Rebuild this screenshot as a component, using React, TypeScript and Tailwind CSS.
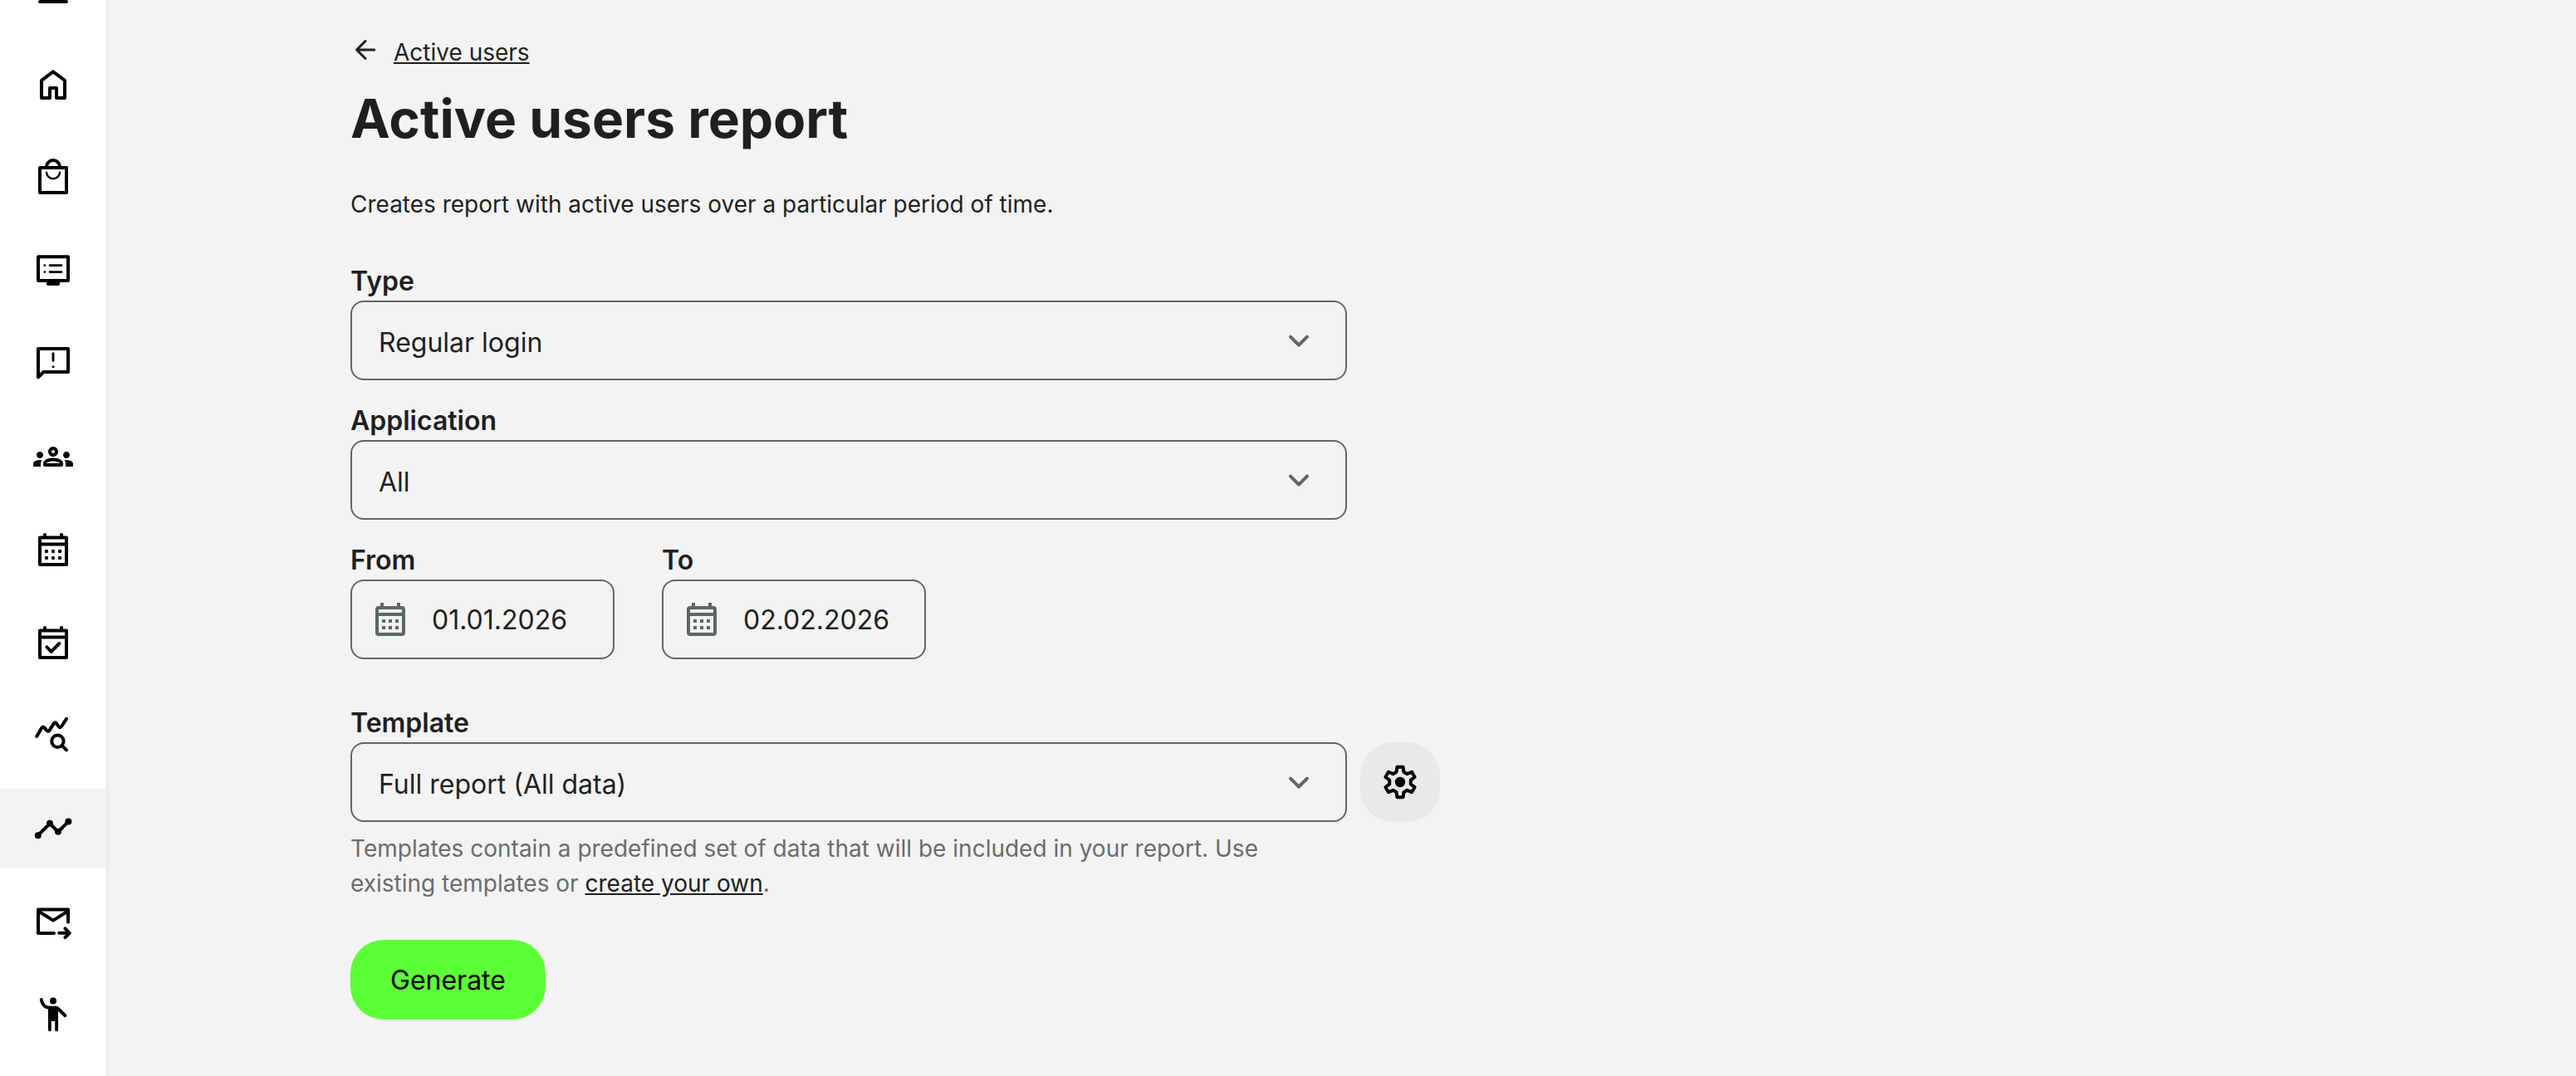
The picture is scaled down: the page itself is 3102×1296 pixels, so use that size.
import React, { useState } from 'react';

type IconProps = { className?: string };

const Glyph: React.FC<{ children: React.ReactNode; className?: string }> = ({ children, className = 'size-12' }) => (
  <svg
    viewBox="0 0 24 24"
    className={`shrink-0 ${className}`}
    fill="none"
    stroke="currentColor"
    strokeWidth="2"
    strokeLinecap="round"
    strokeLinejoin="round"
    aria-hidden="true"
  >
    {children}
  </svg>
);

const MenuIcon = () => (
  <Glyph>
    <path d="M4 7h16M4 12h16M4 18h16" />
  </Glyph>
);

const HomeIcon = () => (
  <Glyph>
    <path d="M5 20V9.4l7-5.2 7 5.2V20h-5v-6h-4v6z" />
  </Glyph>
);

const BagIcon = () => (
  <Glyph>
    <path d="M4 6h16v15H4z" />
    <path d="M8 5.5a4 4 0 0 1 8 0" />
    <path d="M8 8.8a4 3.8 0 0 0 8 0" strokeWidth="1.2" />
  </Glyph>
);

const BoardIcon = () => (
  <Glyph>
    <path d="M3 3.6h18V18H3z" />
    <path d="M8 18.5h8V20a1 1 0 0 1-1 1H9a1 1 0 0 1-1-1z" fill="currentColor" stroke="none" />
    <path d="M10 8.8h7M10 12.8h7" strokeWidth="1.3" />
    <path d="M6.9 8.8h.01M6.9 12.8h.01" strokeWidth="1.4" />
  </Glyph>
);

const FeedbackIcon = () => (
  <Glyph>
    <path d="M3 20.2V3h18v14H6.2z" />
    <path d="M12 5.9v4.2M12 13.9h.01" strokeWidth="1.5" />
  </Glyph>
);

const GroupsIcon = () => (
  <Glyph>
    <path
      fill="currentColor"
      stroke="none"
      d="M4 13c1.1 0 2-.9 2-2s-.9-2-2-2-2 .9-2 2 .9 2 2 2zm1.13 1.1c-.37-.06-.74-.1-1.13-.1-.99 0-1.93.21-2.78.58C.48 14.9 0 15.62 0 16.43v1.07a.5.5 0 0 0 .5.5h4v-1.61c0-.83.23-1.61.63-2.29zM20 13c1.1 0 2-.9 2-2s-.9-2-2-2-2 .9-2 2 .9 2 2 2zm4 3.43c0-.81-.48-1.53-1.22-1.85-.85-.37-1.79-.58-2.78-.58-.39 0-.76.04-1.13.1.4.68.63 1.46.63 2.29V18h4a.5.5 0 0 0 .5-.5zm-7.76-2.78c-1.17-.52-2.61-.9-4.24-.9-1.63 0-3.07.39-4.24.9C6.68 14.13 6 15.21 6 16.39V17a1 1 0 0 0 1 1h10a1 1 0 0 0 1-1v-.61c0-1.18-.68-2.26-1.76-2.74zM8.07 16c.09-.23.13-.39.91-.69.97-.38 1.99-.56 3.02-.56s2.05.18 3.02.56c.77.3.81.46.91.69zM12 8c.55 0 1 .45 1 1s-.45 1-1 1-1-.45-1-1 .45-1 1-1m0-2c-1.66 0-3 1.34-3 3s1.34 3 3 3 3-1.34 3-3-1.34-3-3-3z"
    />
  </Glyph>
);

const CalendarIcon = () => (
  <Glyph>
    <path d="M4 4.8h16V21H4zM4 8.7h16M7 3v1M17 3v1" />
    <path d="M8 13h.01M12 13h.01M16 13h.01M8 17h.01M12 17h.01M16 17h.01" strokeWidth="2.2" />
  </Glyph>
);

const CalendarCheckIcon = () => (
  <Glyph>
    <path d="M4 4.8h16V21H4zM4 8.7h16M7 3v1M17 3v1" />
    <path d="M8.2 14.7l2.7 2.7 4.8-4.9" />
  </Glyph>
);

const StatsIcon = () => (
  <Glyph>
    <path d="M2.1 12.5L5.2 7.3Q6 6.3 6.7 7.2L8.2 9Q9 9.9 9.8 8.8L12.3 4.8Q13.1 3.5 14 4.7L15.3 6.5Q16.2 7.7 17 6.5L20 1.9" />
    <circle cx="14.7" cy="15.4" r="3.6" />
    <path d="M17.4 18.1l2.6 2.6" />
  </Glyph>
);

const TimelineIcon = () => (
  <Glyph>
    <path d="M2.9 16L10 9l5 5 6.2-6.3" />
    <g fill="currentColor" stroke="none">
      <circle cx="2.9" cy="16.1" r="2" />
      <circle cx="10" cy="8.9" r="2" />
      <circle cx="15" cy="13.9" r="2" />
      <circle cx="21.2" cy="7.7" r="2" />
    </g>
  </Glyph>
);

const MailForwardIcon = () => (
  <Glyph>
    <path d="M12.5 19H3V4.8h18v7.4" />
    <path d="M3.5 6L12 11.3 20.5 6" />
    <path d="M15.6 18.9h6M19.2 16.2l2.7 2.7-2.7 2.7" />
  </Glyph>
);

const WavingPersonIcon = () => (
  <Glyph>
    <circle cx="12" cy="3.8" r="2" fill="currentColor" stroke="none" />
    <path d="M4.900 3C5.300 5.900 7.200 7.900 10 7.900h3.600c.5 0 1 .2 1.400.6l4.200 4.100" />
    <path d="M9 8h6v13.200a.9.900 0 0 1-1.900 0V16h-2.200v5.200a.9.900 0 0 1-1.900 0z" fill="currentColor" stroke="none" />
  </Glyph>
);

const ArrowBackIcon = () => (
  <Glyph className="size-9">
    <path d="M19.2 12H5M12 5l-7 7 7 7" />
  </Glyph>
);

const ChevronIcon: React.FC<IconProps> = ({ className = '' }) => (
  <Glyph className={`size-12 ${className}`}>
    <path d="M7 9.8l5 5 5-5" />
  </Glyph>
);

const DateIcon = () => (
  <svg viewBox="0 0 24 24" className="size-12 shrink-0 text-[#5f6566]" fill="currentColor" aria-hidden="true">
    <path d="M19 4h-1V2h-2v2H8V2H6v2H5a2 2 0 0 0-2 2v14a2 2 0 0 0 2 2h14a2 2 0 0 0 2-2V6a2 2 0 0 0-2-2zm0 16H5V10h14zm0-12H5V6h14zM7 12h2v2H7zm4 0h2v2h-2zm4 0h2v2h-2zm-8 4h2v2H7zm4 0h2v2h-2zm4 0h2v2h-2z" />
  </svg>
);

const GearIcon = () => (
  <Glyph>
    <path d="M10.200 2.900h3.600l.4 3 2 1.200 2.800-1.200 1.800 3.100-2.400 1.800v2.400l2.400 1.800-1.800 3.100-2.800-1.200-2 1.200-.4 3h-3.600l-.4-3-2-1.200-2.800 1.200-1.800-3.100 2.400-1.800v-2.400L3.200 9 5 5.900l2.800 1.200 2-1.200z" />
    <circle cx="12" cy="12" r="3.1" fill="currentColor" stroke="none" />
  </Glyph>
);

const navItems = [
  { label: 'Menu', icon: MenuIcon },
  { label: 'Home', icon: HomeIcon },
  { label: 'Shop', icon: BagIcon },
  { label: 'Content', icon: BoardIcon },
  { label: 'Feedback', icon: FeedbackIcon },
  { label: 'Groups', icon: GroupsIcon },
  { label: 'Calendar', icon: CalendarIcon },
  { label: 'Bookings', icon: CalendarCheckIcon },
  { label: 'Statistics', icon: StatsIcon },
  { label: 'Reports', icon: TimelineIcon, active: true },
  { label: 'Mailing', icon: MailForwardIcon },
  { label: 'Onboarding', icon: WavingPersonIcon },
];

const Sidebar: React.FC = () => (
  <nav className="flex w-32 shrink-0 flex-col justify-end gap-4 bg-white pb-[26px] text-black shadow-[0_0_8px_rgba(0,0,0,0.08)]">
    {navItems.map(({ label, icon: Icon, active }) => (
      <a
        key={label}
        href="#"
        aria-label={label}
        aria-current={active ? 'page' : undefined}
        className={`flex h-24 shrink-0 items-center justify-center ${active ? 'bg-[#f3f3f3]' : ''}`}
      >
        <Icon />
      </a>
    ))}
  </nav>
);

type SelectFieldProps = { id: string; label: string; options: string[]; children?: React.ReactNode };

const SelectField: React.FC<SelectFieldProps> = ({ id, label, options, children }) => {
  const [value, setValue] = useState(options[0]);

  return (
    <div>
      <label htmlFor={id} className="block pt-0.5 text-[32px] leading-[46px] font-semibold">
        {label}
      </label>
      <div className="flex gap-4">
        <div className="grid w-full max-w-[1200px] items-center">
          <select
            id={id}
            value={value}
            onChange={(e) => setValue(e.target.value)}
            className="col-start-1 row-start-1 h-24 w-full appearance-none rounded-2xl border-2 border-[#636567] bg-transparent pt-1.5 pr-24 pl-8 text-[32px]"
          >
            {options.map((option) => (
              <option key={option}>{option}</option>
            ))}
          </select>
          <ChevronIcon className="pointer-events-none col-start-1 row-start-1 mr-[34px] justify-self-end text-[#5f6566]" />
        </div>
        {children}
      </div>
    </div>
  );
};

const DateField: React.FC<{ id: string; label: string; initial: string }> = ({ id, label, initial }) => {
  const [value, setValue] = useState(initial);

  return (
    <div className="w-[318px]">
      <label htmlFor={id} className="block pt-0.5 text-[32px] leading-[46px] font-semibold">
        {label}
      </label>
      <div className="flex h-24 items-center gap-[26px] rounded-2xl border-2 border-[#636567] px-[22px]">
        <DateIcon />
        <input
          id={id}
          value={value}
          onChange={(e) => setValue(e.target.value)}
          className="w-full min-w-0 bg-transparent pt-0.5 text-[32px] outline-none"
        />
      </div>
    </div>
  );
};

export default function App() {
  return (
    <div className="flex h-screen overflow-hidden bg-[#f3f3f3] font-['Inter',sans-serif] text-[#1f1f1f]">
      <Sidebar />
      <main className="min-w-0 flex-1 pt-[42px] pr-10 pl-[294px]">
        <div className="flex items-start gap-4">
          <ArrowBackIcon />
          <a href="#" className="text-[28px] leading-[42px] underline">
            Active users
          </a>
        </div>
        <h1 className="mt-[15px] text-[64px] leading-[88px] font-bold">Active users report</h1>
        <p className="mt-[38px] text-[28px] leading-[42px]">
          Creates report with active users over a particular period of time.
        </p>

        <form className="mt-[47px]" onSubmit={(e) => e.preventDefault()}>
          <div className="flex flex-col gap-6">
            <SelectField id="type" label="Type" options={['Regular login']} />
            <SelectField id="application" label="Application" options={['All']} />
            <div className="flex gap-[57px]">
              <DateField id="from" label="From" initial="01.01.2026" />
              <DateField id="to" label="To" initial="02.02.2026" />
            </div>
          </div>

          <div className="mt-[52px]">
            <SelectField id="template" label="Template" options={['Full report (All data)']}>
              <button
                type="button"
                aria-label="Template settings"
                className="flex size-24 shrink-0 items-center justify-center rounded-[40px] bg-[#e8e9eb] text-black"
              >
                <GearIcon />
              </button>
            </SelectField>
            <p className="mt-[11px] max-w-[1200px] text-[28px] leading-[42px] text-[#6b6b6b]">
              Templates contain a predefined set of data that will be included in your report. Use existing templates
              or{' '}
              <a href="#" className="text-[#1f1f1f] underline">
                create your own
              </a>
              .
            </p>
          </div>

          <button
            type="submit"
            className="mt-[47px] h-24 rounded-[40px] bg-[#5cff35] px-12 pt-0.5 text-[32px] text-black"
          >
            Generate
          </button>
        </form>
      </main>
    </div>
  );
}
